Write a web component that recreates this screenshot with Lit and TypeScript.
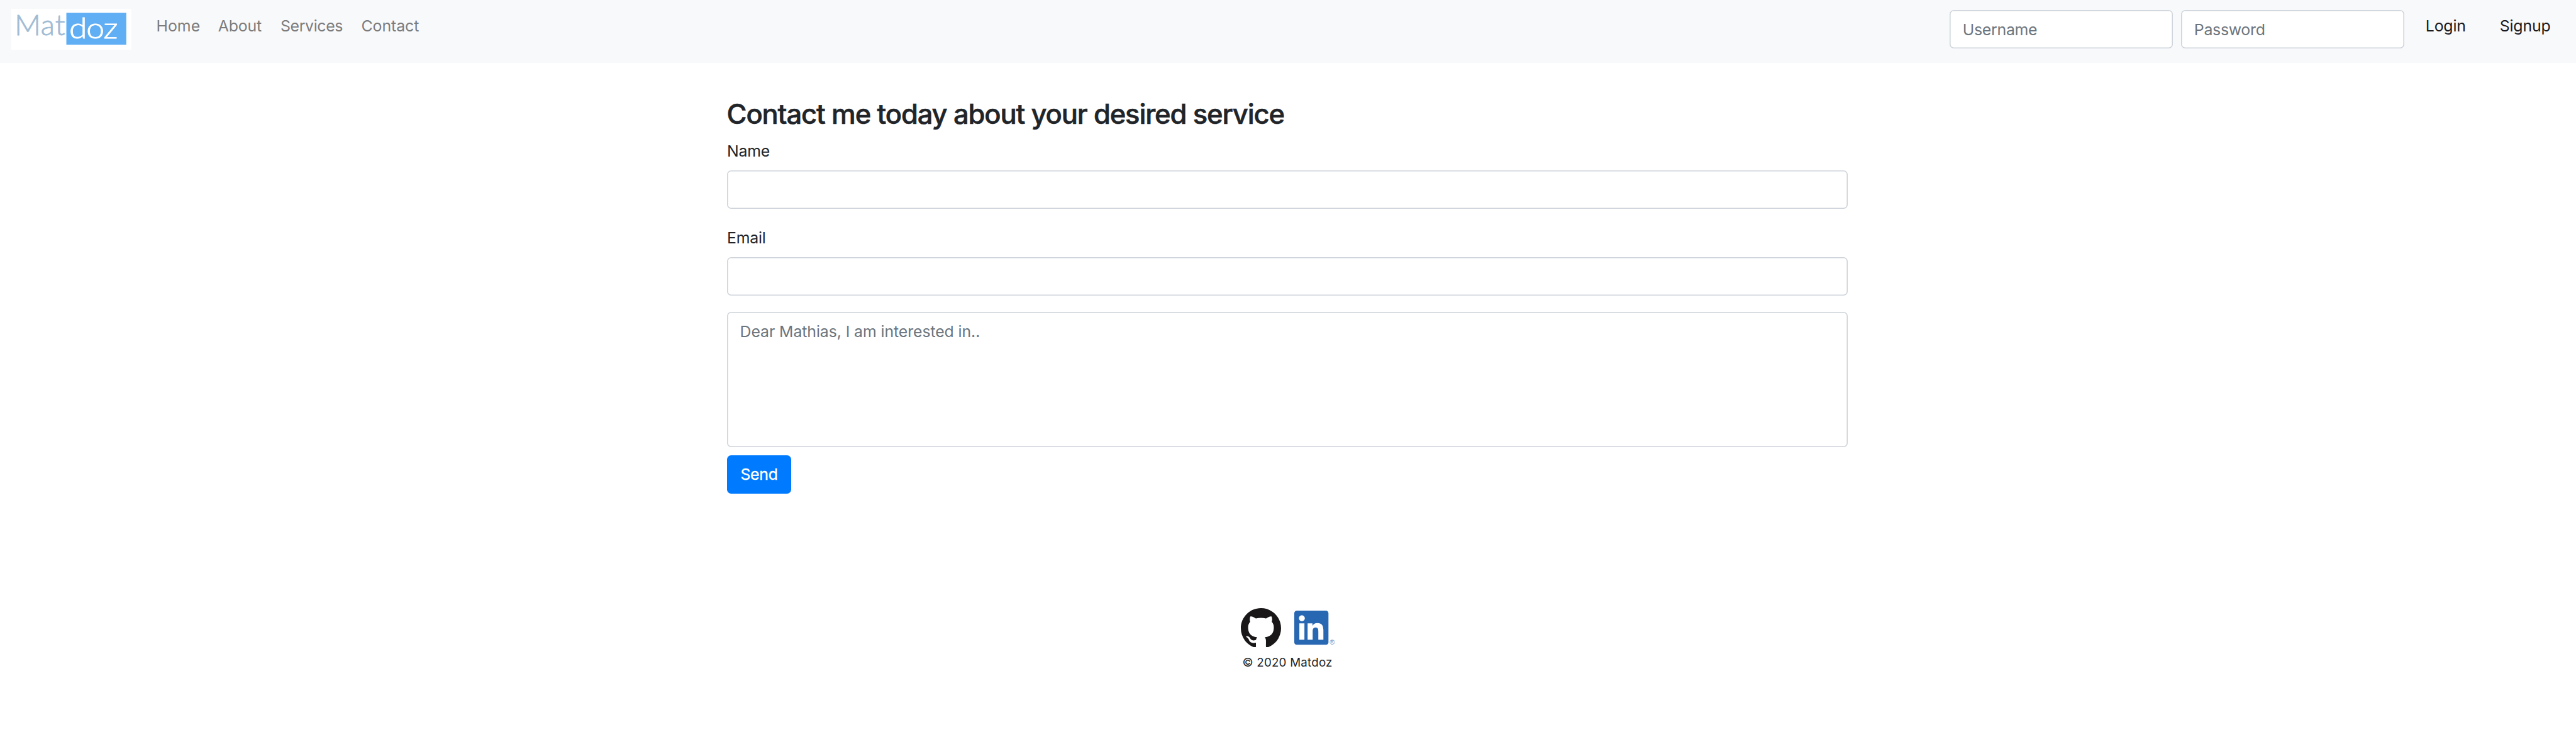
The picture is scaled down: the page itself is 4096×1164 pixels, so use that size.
import { LitElement, html, css } from "lit";
import { customElement } from "lit/decorators.js";

@customElement("site-logo")
class SiteLogo extends LitElement {
  static styles = css`
    :host { display: block; }
    .logo { display: block; width: 100%; height: 100%; overflow: visible; background: #fff; font-family: Lato, "Liberation Sans", sans-serif; font-weight: 300; font-size: 57px; }
    .tile { fill: #60aef4; }
    .mat { fill: #a0bcd4; stroke: #a0bcd4; stroke-width: 1.1; }
    .doz { fill: #fff; stroke: #fff; stroke-width: 1; }
  `;
  render() {
    return html`
      <svg class="logo" viewBox="0 0 238 80" role="img" aria-label="Matdoz">
        <rect class="tile" x="109" y="8" width="118.7" height="63"></rect>
        <text class="mat" x="6.4 58.2 87" y="52">Mat</text>
        <text class="doz" transform="scale(1.13 1)" x="101.5 131.4 161.6" y="58.2">doz</text>
      </svg>
    `;
  }
}

@customElement("nav-bar")
class NavBar extends LitElement {
  static styles = css`
    :host { display: block; }
    .bar {
      display: flex; align-items: flex-start; box-sizing: border-box;
      height: calc(124 * var(--u)); padding-left: calc(22 * var(--u)); background: #f8f9fb;
    }
    .brand { width: calc(238 * var(--u)); height: calc(80 * var(--u)); margin-top: calc(18 * var(--u)); }
    .links {
      display: grid; grid-template-columns: calc(122.5 * var(--u)) calc(123.6 * var(--u)) calc(160 * var(--u)) auto;
      margin: calc(27.6 * var(--u)) 0 0 calc(49.5 * var(--u));
    }
    .link { color: #7c7c7d; text-decoration: none; line-height: calc(48 * var(--u)); white-space: nowrap; }
    .about { letter-spacing: calc(-0.25 * var(--u)); }
    .services { letter-spacing: calc(-0.47 * var(--u)); }
    .contact { letter-spacing: calc(-0.1 * var(--u)); }
    .login { display: flex; align-items: flex-start; margin-left: auto; }
    .field {
      box-sizing: border-box; width: calc(442 * var(--u)); height: calc(76 * var(--u));
      margin: calc(20 * var(--u)) calc(16.4 * var(--u)) 0 0; padding: 0 calc(25.4 * var(--u));
      border: 0; border-radius: calc(8 * var(--u)); outline: 0; background: #fff;
      box-shadow: inset 0 0 0 calc(2 * var(--u)) #ced4da; font: inherit; letter-spacing: calc(-0.36 * var(--u));
    }
    .field::placeholder { color: #6c757d; opacity: 1; }
    .action {
      width: calc(147 * var(--u)); margin-top: calc(27.6 * var(--u)); line-height: calc(48 * var(--u));
      color: #1a1a21; text-decoration: none; letter-spacing: calc(-0.25 * var(--u));
    }
    .first { margin-left: calc(25.4 * var(--u)); }
    .last { width: calc(151 * var(--u)); }
  `;
  render() {
    return html`
      <nav class="bar">
        <site-logo class="brand"></site-logo>
        <div class="links">
          <a class="link home">Home</a>
          <a class="link about">About</a>
          <a class="link services">Services</a>
          <a class="link contact">Contact</a>
        </div>
        <form class="login">
          <input class="field" type="text" placeholder="Username" />
          <input class="field" type="password" placeholder="Password" />
          <a class="action first">Login</a>
          <a class="action last">Signup</a>
        </form>
      </nav>
    `;
  }
}

@customElement("contact-form")
class ContactForm extends LitElement {
  static styles = css`
    :host { display: block; }
    .form { display: flex; flex-direction: column; width: calc(2220 * var(--u)); padding-top: calc(68.7 * var(--u)); margin-left: calc(1440 * var(--u)); }
    .title {
      margin: 0 0 calc(15 * var(--u)) calc(-0.6 * var(--u)); font-size: calc(54.3 * var(--u)); font-weight: 500;
      line-height: calc(67 * var(--u)); letter-spacing: calc(-1.46 * var(--u)); white-space: nowrap;
      -webkit-text-stroke: calc(0.7 * var(--u)) currentColor;
    }
    .label { height: calc(48 * var(--u)); line-height: calc(48 * var(--u)); margin-bottom: calc(15.3 * var(--u)); letter-spacing: calc(-0.35 * var(--u)); }
    .input, .message {
      box-sizing: border-box; width: 100%; margin: 0; border: 0; outline: 0; resize: none; background: #fff;
      border-radius: calc(8 * var(--u)); box-shadow: inset 0 0 0 calc(2 * var(--u)) #ced4da; font: inherit;
    }
    .input { height: calc(76 * var(--u)); margin-bottom: calc(32.7 * var(--u)); padding: 0 calc(26 * var(--u)); }
    .email { margin-bottom: calc(32 * var(--u)); }
    .message {
      display: block; height: calc(268 * var(--u)); padding: calc(14.7 * var(--u)) calc(25.6 * var(--u));
      line-height: calc(48 * var(--u)); letter-spacing: calc(-0.14 * var(--u));
    }
    .message::placeholder { color: #6c757d; opacity: 1; }
    .send {
      width: calc(127 * var(--u)); height: calc(76 * var(--u)); margin: calc(16 * var(--u)) 0 0; padding: 0;
      border: 0; border-radius: calc(8 * var(--u)); background: #007bff; color: #fff; font: inherit;
      letter-spacing: calc(-0.4 * var(--u)); -webkit-text-stroke: calc(0.4 * var(--u)) currentColor;
    }
  `;
  render() {
    return html`
      <form class="form">
        <h2 class="title">Contact me today about your desired service</h2>
        <label class="label">Name</label>
        <input class="input" type="text" />
        <label class="label">Email</label>
        <input class="input email" type="email" />
        <textarea class="message" placeholder="Dear Mathias, I am interested in.."></textarea>
        <button class="send" type="button">Send</button>
      </form>
    `;
  }
}

@customElement("site-footer")
class SiteFooter extends LitElement {
  static styles = css`
    :host { display: block; }
    .footer { display: flex; flex-direction: column; align-items: center; padding-top: calc(226 * var(--u)); }
    .icons { display: flex; align-items: flex-start; gap: calc(26 * var(--u)); height: calc(80 * var(--u)); }
    .github { display: block; width: calc(80 * var(--u)); height: calc(78 * var(--u)); fill: #191717; }
    .linkedin { display: block; overflow: visible; width: calc(81 * var(--u)); height: calc(68 * var(--u)); margin-top: calc(6 * var(--u)); fill: #2867b2; }
    .mark { font: 400 13.5px "Liberation Sans", sans-serif; fill: #5a8cc6; }
    .copy {
      margin: calc(11 * var(--u)) calc(2.4 * var(--u)) 0 0; font-size: calc(23.3 * var(--u)); line-height: calc(36 * var(--u));
      letter-spacing: calc(0.32 * var(--u));
    }
  `;
  render() {
    return html`
      <footer class="footer">
        <div class="icons">
          <svg class="github" viewBox="0 0 98 96" preserveAspectRatio="none">
            <path fill-rule="evenodd" clip-rule="evenodd" d="M48.854 0C21.839 0 0 22 0 49.217c0 21.756 13.993 40.172 33.405 46.69 2.427.49 3.316-1.059 3.316-2.362 0-1.141-.08-5.052-.08-9.127-13.59 2.934-16.42-5.867-16.42-5.867-2.184-5.704-5.42-7.17-5.42-7.17-4.448-3.015.324-3.015.324-3.015 4.934.326 7.523 5.052 7.523 5.052 4.367 7.496 11.404 5.378 14.235 4.074.404-3.178 1.699-5.378 3.074-6.6-10.839-1.141-22.243-5.378-22.243-24.283 0-5.378 1.94-9.778 5.014-13.2-.485-1.222-2.184-6.275.486-13.038 0 0 4.125-1.304 13.426 5.052a46.97 46.97 0 0 1 12.214-1.63c4.125 0 8.33.571 12.213 1.63 9.302-6.356 13.427-5.052 13.427-5.052 2.67 6.763.97 11.816.485 13.038 3.155 3.422 5.015 7.822 5.015 13.2 0 18.905-11.404 23.06-22.324 24.283 1.78 1.548 3.316 4.481 3.316 9.126 0 6.6-.08 11.897-.08 13.526 0 1.304.89 2.853 3.316 2.364 19.412-6.52 33.405-24.935 33.405-46.691C97.707 22 75.788 0 48.854 0z"></path>
          </svg>
          <svg class="linkedin" viewBox="0 0 81 68">
            <path transform="scale(2.82)" d="M20.447 20.452h-3.554v-5.569c0-1.328-.027-3.037-1.852-3.037-1.853 0-2.136 1.445-2.136 2.939v5.667H9.351V9h3.414v1.561h.046c.477-.9 1.637-1.85 3.37-1.85 3.601 0 4.267 2.37 4.267 5.455v6.286zM5.337 7.433c-1.144 0-2.063-.926-2.063-2.065 0-1.138.92-2.063 2.063-2.063 1.14 0 2.064.925 2.064 2.063 0 1.139-.925 2.065-2.064 2.065zm1.782 13.019H3.555V9h3.564v11.452zM22.225 0H1.771C.792 0 0 .774 0 1.729v20.542C0 23.227.792 24 1.771 24h20.451C23.2 24 24 23.227 24 22.271V1.729C24 .774 23.2 0 22.222 0h.003z"></path>
            <text class="mark" x="70" y="67.6">®</text>
          </svg>
        </div>
        <p class="copy">© 2020 Matdoz</p>
      </footer>
    `;
  }
}

@customElement("app-root")
class AppRoot extends LitElement {
  static styles = css`
    :host {
      --u: calc(100vw / 5102);
      display: block; width: 100vw; height: 100vh; overflow: hidden; background: #fff; color: #212529;
      font-family: Inter, "Liberation Sans", sans-serif; font-size: calc(31 * var(--u)); line-height: 1.5;
    }
  `;
  render() {
    return html`
      <nav-bar></nav-bar>
      <contact-form></contact-form>
      <site-footer></site-footer>
    `;
  }
}
